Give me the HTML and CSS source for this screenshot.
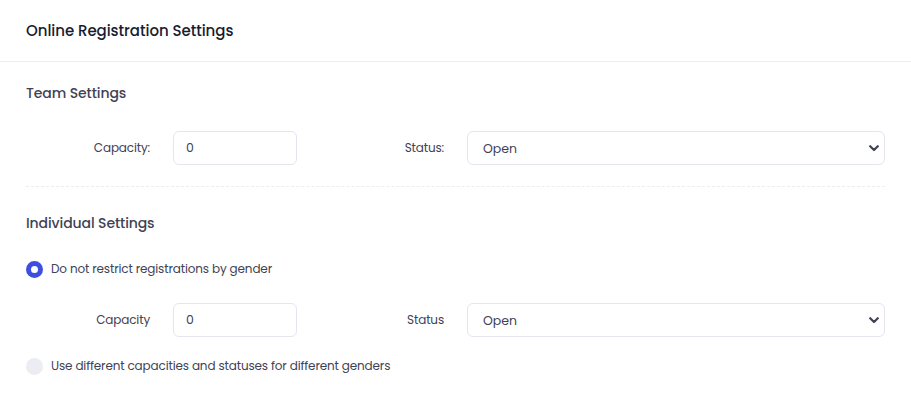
FILE: index.html
```html
<!DOCTYPE html>
<html>
<head>
<meta charset="utf-8">
<link rel="stylesheet" href="styles.css">
</head>
<body>
<div class="card">
  <div class="card-header"><h3 class="card-title">Online Registration Settings</h3></div>
  <div class="card-body">
    <h4 class="section-title">Team Settings</h4>
    <div class="form-row">
      <label class="form-label">Capacity:</label>
      <input class="form-input" type="text" value="0">
      <label class="form-label">Status:</label>
      <div class="select-wrap">
        <select class="form-select"><option>Open</option></select>
        <svg class="chevron" width="10" height="7" viewBox="0 0 10 7"><path d="M1.2 1.2 L5 5 L8.8 1.2" fill="none" stroke="#3f4254" stroke-width="2.2" stroke-linecap="round" stroke-linejoin="round"/></svg>
      </div>
    </div>
    <div class="separator"></div>
    <h4 class="section-title">Individual Settings</h4>
    <label class="radio-row first">
      <span class="radio checked"></span>
      <span class="radio-text">Do not restrict registrations by gender</span>
    </label>
    <div class="form-row second">
      <label class="form-label">Capacity</label>
      <input class="form-input" type="text" value="0">
      <label class="form-label">Status</label>
      <div class="select-wrap">
        <select class="form-select"><option>Open</option></select>
        <svg class="chevron" width="10" height="7" viewBox="0 0 10 7"><path d="M1.2 1.2 L5 5 L8.8 1.2" fill="none" stroke="#3f4254" stroke-width="2.2" stroke-linecap="round" stroke-linejoin="round"/></svg>
      </div>
    </div>
    <label class="radio-row last">
      <span class="radio"></span>
      <span class="radio-text">Use different capacities and statuses for different genders</span>
    </label>
  </div>
</div>
</body>
</html>
```
FILE: styles.css
```css
html, body {
  margin: 0;
  padding: 0;
  background: #ffffff;
}
body {
  font-family: "Poppins", "Open Sans", "DejaVu Sans", sans-serif;
  color: #3f4254;
  width: 911px;
  height: 419px;
  overflow: hidden;
}
.card-header {
  height: 61px;
  border-bottom: 1px solid #ebedf3;
  display: flex;
  align-items: center;
  padding: 0 26px;
}
.card-title {
  margin: 0;
  font-size: 15px;
  font-weight: 500;
  color: #181c32;
  line-height: 20px;
  letter-spacing: -0.05px;
}
.card-body {
  padding: 21px 26px 0 26px;
}
.section-title {
  margin: 0;
  font-size: 14px;
  font-weight: 500;
  color: #3f4254;
  line-height: 20px;
  letter-spacing: -0.1px;
}
.form-row {
  display: grid;
  grid-template-columns: 124px 124px 124px 1fr;
  column-gap: 23px;
  align-items: center;
  margin-top: 28px;
}
.form-row.second {
  margin-top: 24px;
}
.form-label {
  text-align: right;
  font-size: 12px;
  letter-spacing: -0.15px;
  color: #3f4254;
}
.form-input, .form-select {
  box-sizing: border-box;
  height: 34px;
  border: 1px solid #e4e6ef;
  border-radius: 6px;
  background: #fff;
  font-family: inherit;
  font-size: 12.5px;
  color: #3f4254;
  outline: none;
  margin: 0;
}
.form-input {
  width: 124px;
  padding: 0 12px;
}
.select-wrap {
  position: relative;
}
.form-select {
  width: 100%;
  appearance: none;
  -webkit-appearance: none;
  padding: 0 15px;
}
.chevron {
  position: absolute;
  right: 6px;
  top: 14px;
  pointer-events: none;
}
.separator {
  margin-top: 21px;
  border-top: 1px dashed #ebedf3;
  margin-bottom: 26px;
}
.radio-row {
  display: flex;
  align-items: center;
  height: 20px;
  gap: 8px;
}
.radio-row.first {
  margin-top: 26px;
}
.radio-row.last {
  margin-top: 19px;
}
.radio {
  width: 17px;
  height: 17px;
  border-radius: 50%;
  background: #ebedf3;
  box-sizing: border-box;
  flex: none;
}
.radio.checked {
  background: #ffffff;
  border: 5.5px solid #3e4fe0;
}
.radio-text {
  font-size: 12px;
  letter-spacing: -0.15px;
  color: #3f4254;
}
```
